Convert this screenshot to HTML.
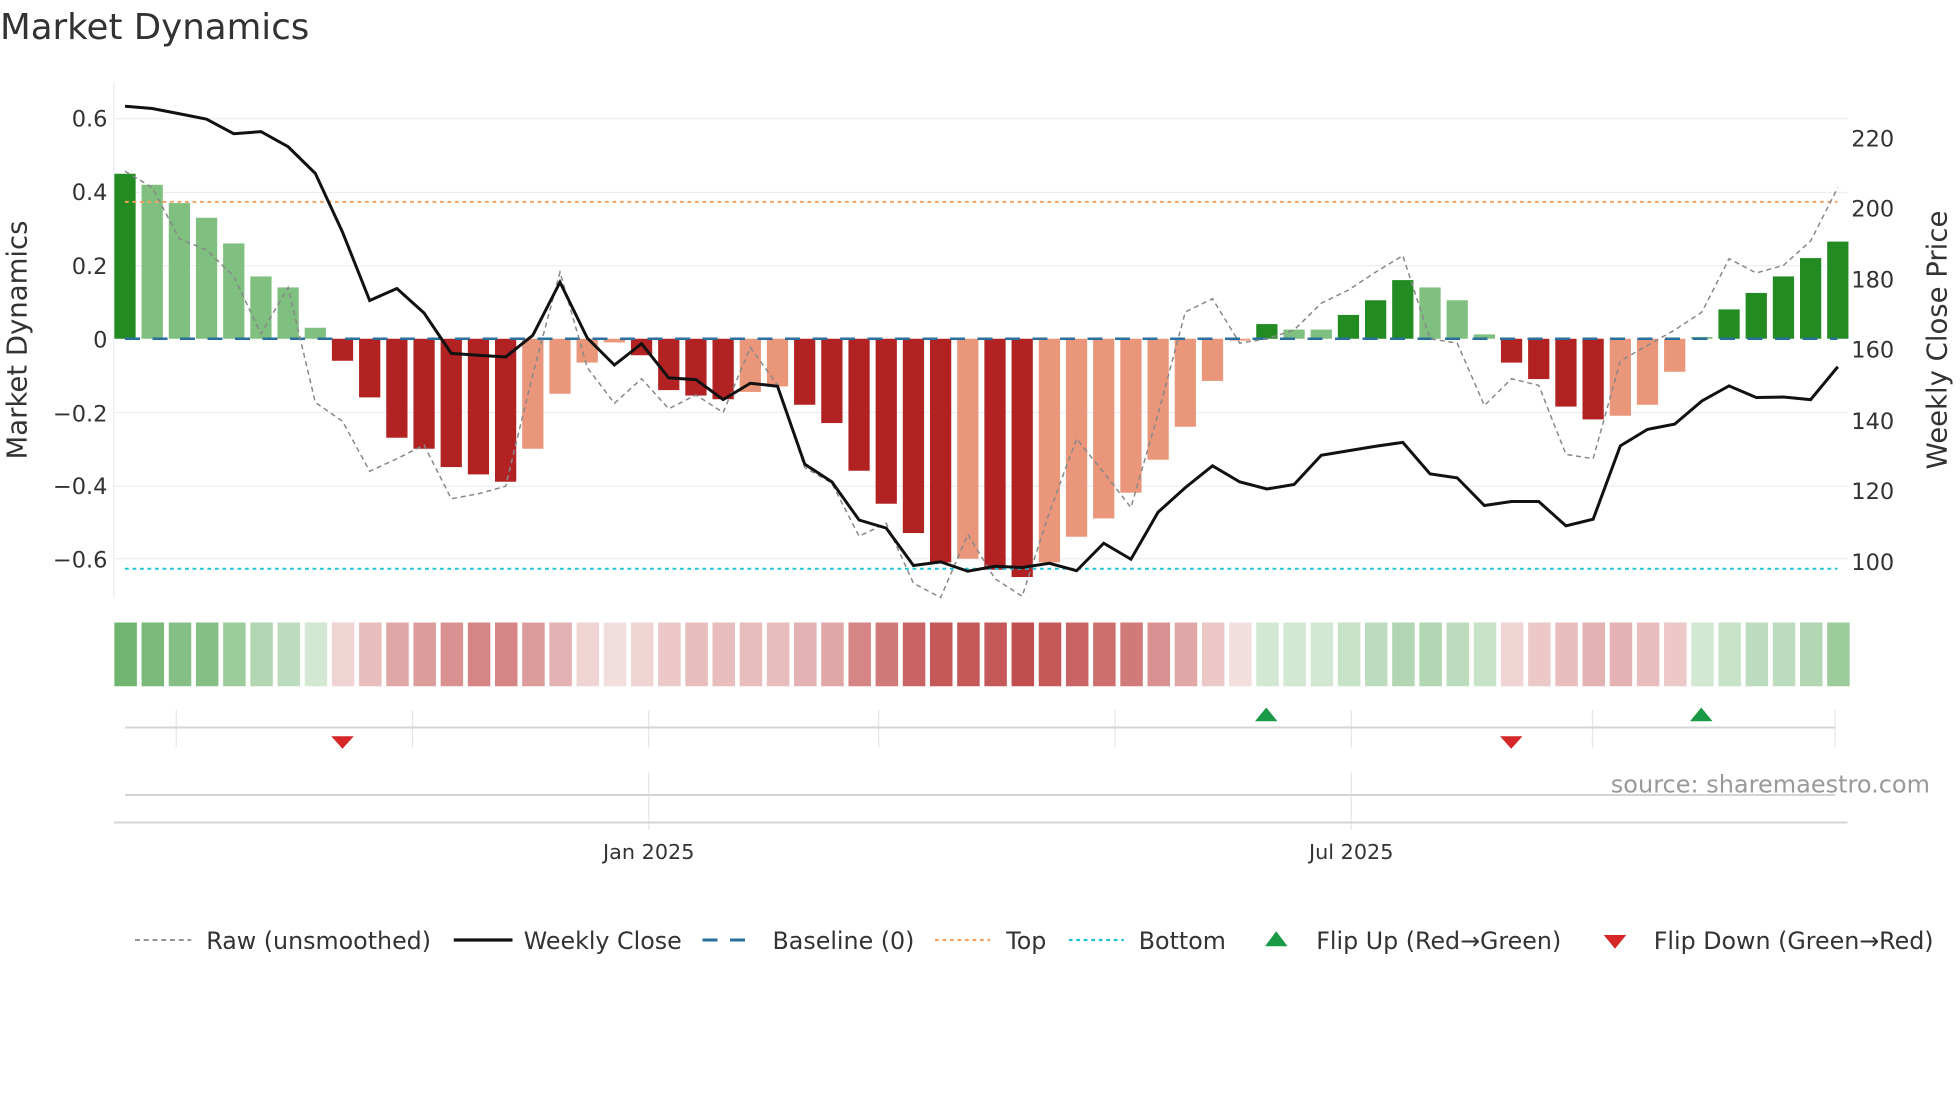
<!DOCTYPE html>
<html><head><meta charset="utf-8"><style>
html,body{margin:0;padding:0;background:#fff;}
svg{display:block;font-family:"DejaVu Sans","Liberation Sans",sans-serif;}
</style></head><body>
<svg id="s" width="1960" height="1102" viewBox="0 0 1568 881.6" xmlns="http://www.w3.org/2000/svg">
<text x="0" y="31" font-size="28.5" fill="#333">Market Dynamics</text>
<g stroke="#eceef2" stroke-width="1">
<line x1="91" y1="95" x2="1478" y2="95"/><line x1="91" y1="154" x2="1478" y2="154"/>
<line x1="91" y1="212.5" x2="1478" y2="212.5"/><line x1="91" y1="330" x2="1478" y2="330"/>
<line x1="91" y1="389" x2="1478" y2="389"/><line x1="91" y1="447" x2="1478" y2="447"/>
<line x1="91" y1="65" x2="91" y2="478"/>
</g>
<g id="bars"></g>
<line x1="100" y1="271" x2="1470" y2="271" stroke="#2a6f9e" stroke-width="2" stroke-dasharray="12,10"/>
<line x1="100" y1="161.5" x2="1470" y2="161.5" stroke="#f4a261" stroke-width="1.6" stroke-dasharray="3,3"/>
<line x1="100" y1="455" x2="1470" y2="455" stroke="#22c3d6" stroke-width="1.6" stroke-dasharray="3,3"/>
<polyline id="raw" fill="none" stroke="#888" stroke-width="1.2" stroke-dasharray="4,3"/>
<polyline id="close" fill="none" stroke="#111" stroke-width="2.4"/>
<g font-size="18" fill="#333" text-anchor="end">
<text x="86" y="101">0.6</text><text x="86" y="160">0.4</text><text x="86" y="219">0.2</text>
<text x="86" y="278">0</text><text x="86" y="337">−0.2</text><text x="86" y="395">−0.4</text><text x="86" y="454">−0.6</text>
</g>
<g font-size="18" fill="#333">
<text x="1481" y="117">220</text><text x="1481" y="173">200</text><text x="1481" y="230">180</text>
<text x="1481" y="286">160</text><text x="1481" y="343">140</text><text x="1481" y="399">120</text><text x="1481" y="456">100</text>
</g>
<text transform="translate(21,272) rotate(-90)" font-size="22" fill="#333" text-anchor="middle">Market Dynamics</text>
<text transform="translate(1557,272) rotate(-90)" font-size="22" fill="#333" text-anchor="middle">Weekly Close Price</text>
<g id="heat"></g>
<g stroke="#e6e6e6" stroke-width="1">
<line x1="141" y1="568" x2="141" y2="598"/><line x1="330" y1="568" x2="330" y2="598"/>
<line x1="519" y1="568" x2="519" y2="598"/><line x1="703" y1="568" x2="703" y2="598"/>
<line x1="892" y1="568" x2="892" y2="598"/><line x1="1081" y1="568" x2="1081" y2="598"/>
<line x1="1274" y1="568" x2="1274" y2="598"/><line x1="1468" y1="568" x2="1468" y2="598"/>
<line x1="519" y1="618" x2="519" y2="664"/><line x1="1081" y1="618" x2="1081" y2="664"/>
</g>
<line x1="100" y1="582" x2="1468" y2="582" stroke="#d4d4d4" stroke-width="1.6"/>
<line x1="100" y1="636" x2="1468" y2="636" stroke="#d4d4d4" stroke-width="1.6"/>
<line x1="91" y1="658" x2="1478" y2="658" stroke="#d4d4d4" stroke-width="1.6"/>
<path d="M265,589 L283,589 L274,599 Z" fill="#d62728"/>
<path d="M1200,589 L1218,589 L1209,599 Z" fill="#d62728"/>
<path d="M1004,577 L1022,577 L1013,566 Z" fill="#1a9a46"/>
<path d="M1352,577 L1370,577 L1361,566 Z" fill="#1a9a46"/>
<text x="1544" y="634" font-size="19.2" fill="#999" text-anchor="end">source: sharemaestro.com</text>
<g font-size="16.6" fill="#333" text-anchor="middle">
<text x="519" y="687">Jan 2025</text><text x="1081" y="687">Jul 2025</text>
</g>
<g font-size="19" fill="#333">
<line x1="108" y1="752" x2="153" y2="752" stroke="#888" stroke-width="1.4" stroke-dasharray="4,3"/>
<text x="165" y="759">Raw (unsmoothed)</text>
<line x1="363" y1="752" x2="410" y2="752" stroke="#111" stroke-width="2.6"/>
<text x="419" y="759">Weekly Close</text>
<line x1="562" y1="752" x2="606" y2="752" stroke="#2a6f9e" stroke-width="2.4" stroke-dasharray="12,10"/>
<text x="618" y="759">Baseline (0)</text>
<line x1="748" y1="752" x2="792" y2="752" stroke="#f4a261" stroke-width="1.8" stroke-dasharray="3,3"/>
<text x="805" y="759">Top</text>
<line x1="855" y1="752" x2="899" y2="752" stroke="#22c3d6" stroke-width="1.8" stroke-dasharray="3,3"/>
<text x="911" y="759">Bottom</text>
<path d="M1012,757 L1030,757 L1021,745 Z" fill="#1a9a46"/>
<text x="1053" y="759">Flip Up (Red→Green)</text>
<path d="M1283,748 L1301,748 L1292,759 Z" fill="#d62728"/>
<text x="1323" y="759">Flip Down (Green→Red)</text>
</g>
</svg>
<script>
var NS="http://www.w3.org/2000/svg";
var v=[.45,.42,.37,.33,.26,.17,.14,.03,-.06,-.16,-.27,-.30,-.35,-.37,-.39,-.30,-.15,-.065,-.01,-.045,-.14,-.155,-.165,-.145,-.13,-.18,-.23,-.36,-.45,-.53,-.61,-.60,-.63,-.65,-.61,-.54,-.49,-.42,-.33,-.24,-.115,-.005,.04,.025,.025,.065,.105,.16,.14,.105,.012,-.065,-.11,-.185,-.22,-.21,-.18,-.09,.005,.08,.125,.17,.22,.265];
var dark={0:1,42:1,45:1,46:1,47:1,59:1,60:1,61:1,62:1,63:1,8:1,9:1,10:1,11:1,12:1,13:1,14:1,19:1,20:1,21:1,22:1,25:1,26:1,27:1,28:1,29:1,30:1,32:1,33:1,51:1,52:1,53:1,54:1};
var hg=[.65,.6,.55,.55,.45,.35,.3,.2,.2,.3,.4,.45,.5,.55,.55,.45,.35,.2,.15,.2,.25,.3,.3,.3,.3,.35,.4,.55,.6,.7,.75,.75,.75,.8,.75,.7,.65,.6,.5,.4,.25,.15,.2,.2,.2,.25,.3,.35,.35,.3,.25,.2,.25,.3,.35,.35,.3,.25,.2,.25,.3,.3,.35,.45];
var bars=document.getElementById("bars"),heat=document.getElementById("heat");
function mix(c,a){return "rgb("+c.map(function(x){return Math.round(x*a+255*(1-a))}).join(",")+")";}
for(var i=0;i<64;i++){
 var x=91.5+21.75*i,h=Math.abs(v[i])*293.3,y=v[i]>0?271-h:271;
 var r=document.createElementNS(NS,"rect");
 r.setAttribute("x",x);r.setAttribute("y",y);r.setAttribute("width",17);r.setAttribute("height",h);
 var col=v[i]>0?(dark[i]?"#228b22":"#7fbf7f"):(dark[i]?"#b22222":"#e9967a");
 r.setAttribute("fill",col);bars.appendChild(r);
 var g=document.createElementNS(NS,"rect");
 g.setAttribute("x",x);g.setAttribute("y",498);g.setAttribute("width",18);g.setAttribute("height",51);
 var isG=(i<=7)||(i>=42&&i<=50)||(i>=58);
 g.setAttribute("fill",isG?mix([34,139,34],hg[i]):mix([178,34,34],hg[i]));
 heat.appendChild(g);
}
var cl=[85,86.8,91,95.3,107,105.3,117.4,138.7,185.7,240.4,230.8,250.4,282.7,284.2,285.6,268.2,225.8,270.3,292,275,302.3,303.7,319.7,306.6,309,371.3,385.5,416,422.5,452.4,449.5,457,453,454,450.6,456.6,434.6,447.4,409.7,390.1,372.7,385.5,391.2,387.6,364.2,360.6,357,353.9,379.1,382.3,404.4,401.2,401.2,420.7,415.4,356.7,343.5,339.3,320.8,308.7,318,317.6,319.7,293.4];
var rw=[137,150,191,200,221,267,230,322,337,377,367,356,399,395,389,299.5,217.7,294,322.6,303,327,316,330,278,308,374,386.6,429,418.6,466.6,478,427.5,463,477,410,351,378,406,331,249.6,239,274.5,271,264,242.6,232,217.7,204.5,271,274.5,324.4,303,308.3,363.5,367,288.8,276.3,264,249.7,207,218.4,212.3,192.8,150];
function pts(a){return a.map(function(y,i){return (100+21.75*i)+","+y}).join(" ");}
document.getElementById("close").setAttribute("points",pts(cl));
document.getElementById("raw").setAttribute("points",pts(rw));
</script>
</body></html>
